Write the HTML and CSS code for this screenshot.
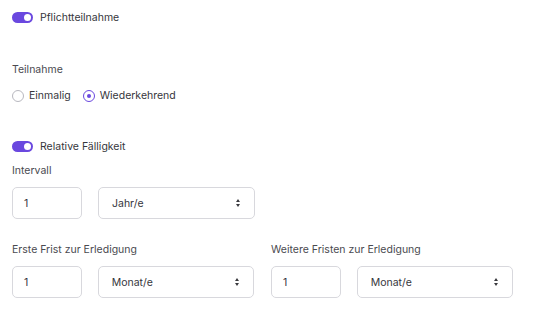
FILE: index.html
```html
<!DOCTYPE html>
<html lang="de">
<head>
<meta charset="utf-8">
<link rel="stylesheet" href="styles.css">
</head>
<body>
<div class="form">
  <label class="switch-row first">
    <span class="switch"><span class="knob"></span></span>
    <span class="switch-label">Pflichtteilnahme</span>
  </label>

  <div class="group participation">
    <div class="label">Teilnahme</div>
    <div class="radios">
      <label class="radio"><span class="dot"></span>Einmalig</label>
      <label class="radio"><span class="dot checked"></span>Wiederkehrend</label>
    </div>
  </div>

  <label class="switch-row relative">
    <span class="switch"><span class="knob"></span></span>
    <span class="switch-label">Relative Fälligkeit</span>
  </label>

  <div class="group interval">
    <div class="label">Intervall</div>
    <div class="fields">
      <div class="input">1</div>
      <div class="select">Jahr/e<span class="arrows"></span></div>
    </div>
  </div>

  <div class="columns">
    <div class="group">
      <div class="label">Erste Frist zur Erledigung</div>
      <div class="fields">
        <div class="input">1</div>
        <div class="select">Monat/e<span class="arrows"></span></div>
      </div>
    </div>
    <div class="group">
      <div class="label">Weitere Fristen zur Erledigung</div>
      <div class="fields">
        <div class="input">1</div>
        <div class="select">Monat/e<span class="arrows"></span></div>
      </div>
    </div>
  </div>
</div>
</body>
</html>
```

FILE: styles.css
```css
* { box-sizing: border-box; }
html, body { margin: 0; background: #fff; }
body {
  font-family: Inter, "Noto Sans", sans-serif;
  font-size: 10.5px;
  color: #36363c;
}
.form {
  padding: 11px 12px 0 12px;
  display: flex;
  flex-direction: column;
}
.switch-row {
  display: flex;
  align-items: center;
  gap: 7px;
  height: 12px;
}
.switch {
  width: 21px;
  height: 11px;
  border-radius: 6px;
  background: #6a48df;
  position: relative;
  display: inline-block;
}
.knob {
  position: absolute;
  right: 2px;
  top: 2px;
  width: 7px;
  height: 7px;
  border-radius: 50%;
  background: #fff;
}
.switch-label { color: #36363c; }
.label { color: #4a4a50; line-height: 13px; }
.participation { margin-top: 40px; }
.radios {
  display: flex;
  gap: 12px;
  margin-top: 13px;
  align-items: center;
}
.radio {
  display: flex;
  align-items: center;
  gap: 5px;
  color: #36363c;
}
.dot {
  width: 12px;
  height: 12px;
  border-radius: 50%;
  border: 1px solid #b8b8bf;
  display: inline-flex;
  align-items: center;
  justify-content: center;
}
.dot.checked { border-color: #6a48df; }
.dot.checked::after {
  content: "";
  width: 4px;
  height: 4px;
  border-radius: 50%;
  background: #6a48df;
}
.relative { margin-top: 38px; }
.interval { margin-top: 12px; }
.fields {
  display: flex;
  gap: 16px;
  margin-top: 10px;
}
.input, .select {
  height: 32px;
  border: 1px solid #d8d8dd;
  border-radius: 5px;
  display: flex;
  align-items: center;
  padding: 0 11px;
  color: #36363c;
}
.input { width: 70px; }
.select {
  width: 157px;
  justify-content: space-between;
  padding: 0 13px 0 13px;
}
.arrows {
  width: 5px;
  height: 8px;
  position: relative;
}
.arrows::before, .arrows::after {
  content: "";
  position: absolute;
  left: 0;
  border-left: 2.5px solid transparent;
  border-right: 2.5px solid transparent;
}
.arrows::before { top: 0; border-bottom: 3px solid #3a3a3f; }
.arrows::after { bottom: 0; border-top: 3px solid #3a3a3f; }
.columns {
  display: flex;
  gap: 17px;
  margin-top: 24px;
}
.columns .group { width: 242px; }
```
